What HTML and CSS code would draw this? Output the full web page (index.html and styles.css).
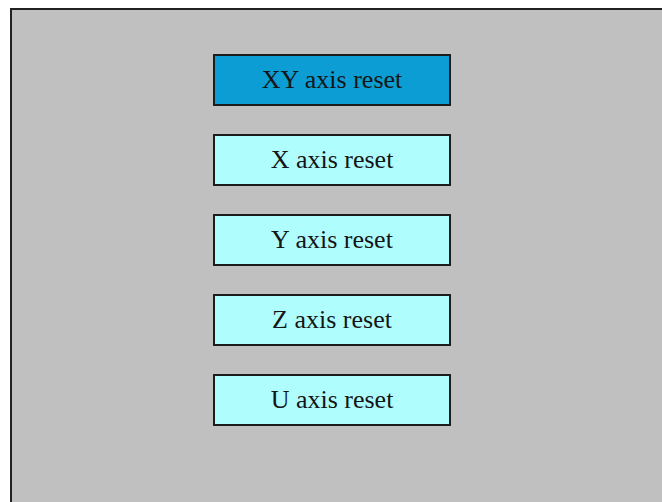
FILE: index.html
```html
<!DOCTYPE html>
<html lang="en">
<head>
    <meta charset="UTF-8">
    <title>Axis Reset</title>
    <link rel="stylesheet" href="styles.css">
</head>
<body>
    <div class="panel">
        <div class="menuList">
            <button class="menuBtn active">XY axis reset</button>
            <button class="menuBtn">X axis reset</button>
            <button class="menuBtn">Y axis reset</button>
            <button class="menuBtn">Z axis reset</button>
            <button class="menuBtn">U axis reset</button>
        </div>
    </div>
</body>
</html>
```

FILE: styles.css
```css
html, body {
    margin: 0;
    background-color: #fff;
}

.panel {
    margin: 8px 0 0 10px;
    width: 652px;
    height: 494px;
    background-color: #c0c0c0;
    border-top: 2px solid #222;
    border-left: 2px solid #222;
    box-sizing: border-box;
    padding: 44px 0 0 201px;
}

.menuList {
    display: flex;
    flex-direction: column;
    gap: 28px;
}

.menuBtn {
    width: 238px;
    height: 52px;
    box-sizing: border-box;
    border: 2px solid #1c1c1c;
    background-color: #b0fdfd;
    color: #151515;
    font-family: "Liberation Serif", "Times New Roman", serif;
    font-size: 26px;
    padding: 0;
    text-align: center;
}

.menuBtn.active {
    background-color: #0c9dd4;
}
```
